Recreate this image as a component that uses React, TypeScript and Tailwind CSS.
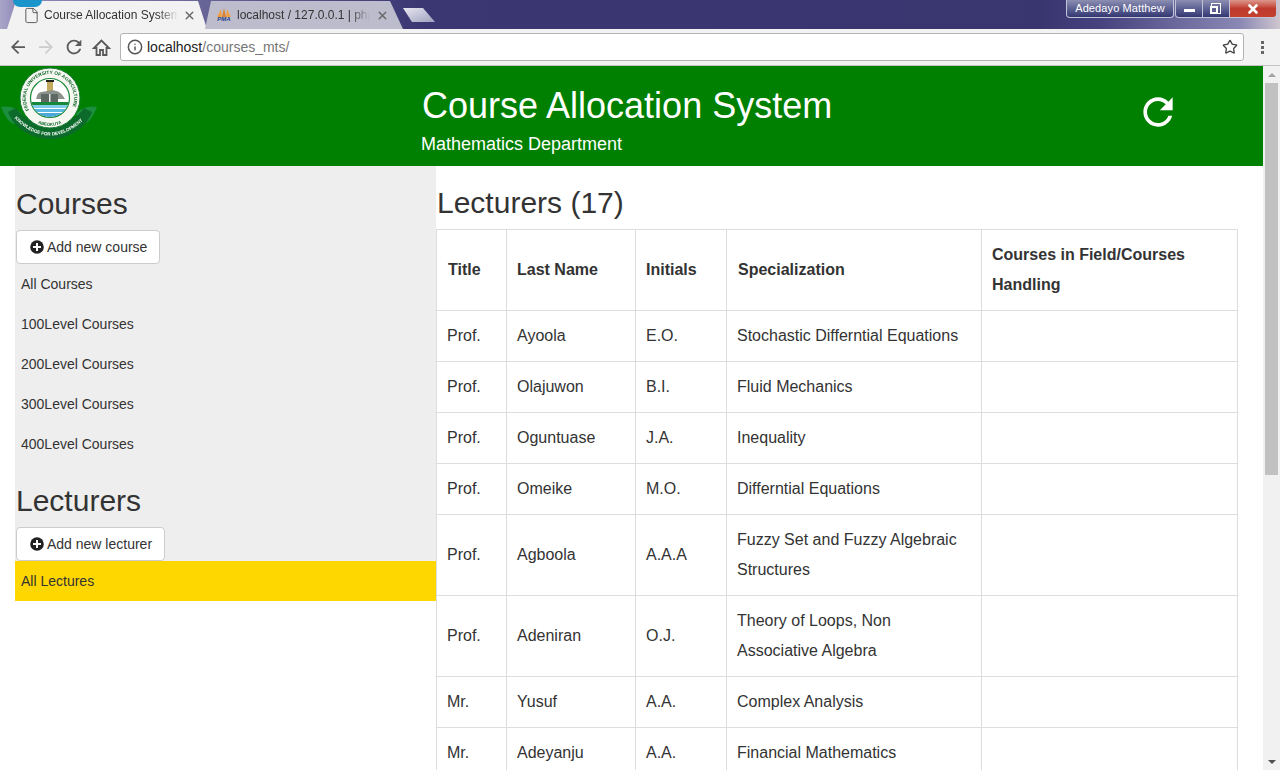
import React from 'react';
import { Info, Star, X, File } from 'lucide-react';

const lecturers = [
  { title: 'Prof.', last: 'Ayoola', initials: 'E.O.', spec: 'Stochastic Differntial Equations' },
  { title: 'Prof.', last: 'Olajuwon', initials: 'B.I.', spec: 'Fluid Mechanics' },
  { title: 'Prof.', last: 'Oguntuase', initials: 'J.A.', spec: 'Inequality' },
  { title: 'Prof.', last: 'Omeike', initials: 'M.O.', spec: 'Differntial Equations' },
  { title: 'Prof.', last: 'Agboola', initials: 'A.A.A', spec: 'Fuzzy Set and Fuzzy Algebraic Structures' },
  { title: 'Prof.', last: 'Adeniran', initials: 'O.J.', spec: 'Theory of Loops, Non Associative Algebra' },
  { title: 'Mr.', last: 'Yusuf', initials: 'A.A.', spec: 'Complex Analysis' },
  { title: 'Mr.', last: 'Adeyanju', initials: 'A.A.', spec: 'Financial Mathematics' },
];

const courseLinks = ['All Courses', '100Level Courses', '200Level Courses', '300Level Courses', '400Level Courses'];

const REFRESH =
  'M17.65 6.35C16.2 4.9 14.21 4 12 4c-4.42 0-7.99 3.58-7.99 8s3.57 8 7.99 8c3.73 0 6.84-2.55 7.73-6h-2.08c-.82 2.33-3.04 4-5.65 4-3.31 0-6-2.69-6-6s2.69-6 6-6c1.66 0 3.14.69 4.22 1.78L13 11h7V4l-2.35 2.35z';

const Logo = () => (
  <svg width="98" height="74" viewBox="0 0 98 74" className="shrink-0 blur-[0.3px]">
    <defs>
      <clipPath id="inner">
        <circle cx="50" cy="32" r="19" />
      </clipPath>
      <path id="ringTop" d="M29.2 44 A24 24 0 1 1 70.8 44" />
      <path id="ringBottom" d="M36 56.2 A28 28 0 0 0 64 56.2" />
      <path id="ribbon" d="M12 50 Q50 89 88 50" />
    </defs>
    {/* leaves */}
    <path d="M1 41 C9 39 17 42 22 48 L14 58 C8 56 5 50 1 41Z" fill="#1c8f3e" />
    <path d="M97 41 C89 39 81 42 76 48 L84 58 C90 56 93 50 97 41Z" fill="#1c8f3e" />
    <path d="M8 46 C22 82 78 82 92 46 L84 42 C70 64 30 64 16 42Z" fill="#0c6a2a" />
    <circle cx="50" cy="32" r="30" fill="#f5f7f0" stroke="#157a33" strokeWidth="1" />
    <text fontSize="4.8" fontWeight="700" fill="#14692f" fontFamily="Liberation Sans, sans-serif">
      <textPath href="#ringTop">FEDERAL UNIVERSITY OF AGRICULTURE</textPath>
    </text>
    <text fontSize="4.4" fontWeight="700" fill="#14692f" fontFamily="Liberation Sans, sans-serif">
      <textPath href="#ringBottom" startOffset="2">ABEOKUTA</textPath>
    </text>
    <circle cx="50" cy="32" r="19.5" fill="#ffffff" stroke="#1a8a3a" strokeWidth="1.2" />
    <g clipPath="url(#inner)">
      <rect x="46" y="14" width="8" height="2" fill="#222" />
      <rect x="47" y="16" width="6" height="9" fill="#c2a95e" />
      <path d="M37 30 C38 25 44 26 47 25 C53 23 60 25 63 30 L65 33 L36 33Z" fill="#8b918b" />
      <rect x="41" y="28" width="17" height="8" fill="#5d6862" />
      <rect x="49" y="28" width="1.5" height="8" fill="#e8e8e8" />
      <rect x="28" y="36" width="44" height="3" fill="#17883a" />
      <rect x="28" y="39" width="44" height="3" fill="#7fcdea" />
      <rect x="28" y="42" width="44" height="1" fill="#ffffff" />
      <rect x="28" y="43" width="44" height="3" fill="#5cb9e2" />
      <rect x="28" y="46" width="44" height="1" fill="#ffffff" />
      <rect x="28" y="47" width="44" height="6" fill="#4aa9d8" />
    </g>
    <text fontSize="4.6" fontWeight="700" fill="#ffffff" fontFamily="Liberation Sans, sans-serif">
      <textPath href="#ribbon" startOffset="3">KNOWLEDGE FOR DEVELOPMENT</textPath>
    </text>
  </svg>
);

const PlusIcon = () => (
  <svg width="14" height="14" viewBox="0 0 14 14" className="shrink-0">
    <circle cx="7" cy="7" r="6.8" fill="#222" />
    <path d="M6 3h2v3h3v2H8v3H6V8H3V6h3z" fill="#fff" />
  </svg>
);

const PmaIcon = () => (
  <div className="w-[16px] h-[14px] shrink-0 flex flex-col items-center">
    <svg width="16" height="9" viewBox="0 0 16 9">
      <path d="M1 9 L5 1 L6 9Z" fill="#f0a040" />
      <path d="M6 9 L8 0 L10 9Z" fill="#d9822b" />
      <path d="M10 9 L11 1 L15 9Z" fill="#f0a040" />
    </svg>
    <span className="text-[6px] leading-[5px] font-bold italic text-[#2b3f8e]">PMA</span>
  </div>
);

export default function App() {
  return (
    <div className="h-[770px] w-[1280px] overflow-hidden flex flex-col bg-white text-[16px] text-[#333] font-['Liberation_Sans',Arial,sans-serif]">
      {/* Window title bar + tabs */}
      <div className="h-[29px] shrink-0 flex items-end pl-[7px] relative overflow-hidden bg-[linear-gradient(90deg,#a9a5c8_0px,#8f8bb8_16px,#3a3773_420px,#38356f_1040px,#45427e_1100px,#8a88b4_1240px,#cfc6cf_1280px)]">
        <div className="w-[200px] h-[28px] shrink-0 bg-[#f2f2f2] [clip-path:polygon(0_100%,9px_0,191px_0,200px_100%)] flex items-center pl-[16px]">
          <File size={17} strokeWidth={1.2} className="text-[#444] shrink-0" />
          <span className="ml-[4px] text-[12px] text-[#333] whitespace-nowrap overflow-hidden w-[134px] shrink-0 [mask-image:linear-gradient(90deg,#000_85%,transparent)]">Course Allocation System</span>
          <X size={13} strokeWidth={2.6} className="ml-[5px] text-[#666] shrink-0" />
        </div>
        <div className="w-[198px] h-[28px] shrink-0 -ml-[2px] bg-[#bcbccc] [clip-path:polygon(0_100%,6px_0,185px_0,198px_100%)] flex items-center pl-[11px]">
          <PmaIcon />
          <span className="ml-[5px] text-[12px] text-[#333] whitespace-nowrap overflow-hidden w-[133px] shrink-0 [mask-image:linear-gradient(90deg,#000_85%,transparent)]">localhost / 127.0.0.1 | phpMyAdmin</span>
          <X size={13} strokeWidth={2.6} className="ml-[6px] text-[#666] shrink-0" />
        </div>
        <div className="w-[32px] h-[14px] mb-[7px] shrink-0 bg-gradient-to-br from-[#e8e8f0] to-[#a0a0c0] [clip-path:polygon(0_0,20px_0,32px_100%,9px_100%)]" />

        <div className="ml-auto self-start flex h-[18px] mr-[3px]">
          <div className="w-[108px] mr-[1px] rounded-b-[4px] border border-t-0 border-[#c4c4d8] bg-gradient-to-b from-[#8d8eb2] to-[#343873] text-[11px] leading-[17px] text-center text-white whitespace-nowrap tracking-[0.1px]">Adedayo Matthew</div>
          <div className="w-[28px] rounded-bl-[4px] border border-t-0 border-[#c4c4d8] bg-gradient-to-b from-[#8d8eb2] to-[#343873] flex items-center justify-center">
            <div className="w-[11px] h-[3px] mt-[3px] bg-white" />
          </div>
          <div className="w-[27px] border-b border-r border-[#c4c4d8] bg-gradient-to-b from-[#8d8eb2] to-[#343873] flex items-center justify-center">
            <div className="w-[10px] h-[11px] mb-[1px] border border-white relative">
              <div className="absolute left-[-2px] bottom-[-1px] w-[8px] h-[8px] border-2 border-white bg-[#5f6090]" />
            </div>
          </div>
          <div className="w-[47px] rounded-br-[4px] border-b border-r border-[#c4c4d8] bg-gradient-to-b from-[#dc968c] via-[#c0392f] to-[#c2402c] flex items-center justify-center">
            <X size={14} strokeWidth={4.5} className="text-white" />
          </div>
        </div>
      </div>

      {/* Browser toolbar */}
      <div className="h-[37px] shrink-0 flex items-center bg-[#f2f2f2] border-b border-[#c4c4c4]">
        <svg width="14" height="14" viewBox="0 0 16 16" className="ml-[11px] shrink-0">
          <path d="M16 7H3.83l5.59-5.59L8 0 0 8l8 8 1.41-1.41L3.83 9H16z" fill="#5a5a5a" />
        </svg>
        <svg width="14" height="14" viewBox="0 0 16 16" className="ml-[14px] shrink-0">
          <path d="M0 7h12.17L6.58 1.41 8 0l8 8-8 8-1.41-1.41L12.17 9H0z" fill="#cccccc" />
        </svg>
        <svg width="22" height="22" viewBox="0 0 24 24" className="ml-[10px] shrink-0">
          <path d={REFRESH} fill="#5a5a5a" />
        </svg>
        <svg width="19" height="19" viewBox="0 0 19 19" className="ml-[7px] shrink-0">
          <path d="M9.5 2.5 L2 10 H4.5 V17 H8 V12 H11 V17 H14.5 V10 H17 Z" fill="none" stroke="#5a5a5a" strokeWidth="1.8" strokeLinejoin="miter" />
        </svg>
        <div className="ml-[9px] w-[1124px] h-[28px] shrink-0 flex items-center bg-white border border-[#b4b4b4] rounded-[3px] pl-[6px] pr-[5px]">
          <Info size={16} strokeWidth={2.2} className="text-[#555]" />
          <span className="ml-[4px] text-[14px] text-[#222]">localhost</span>
          <span className="text-[14px] text-[#777]">/courses_mts/</span>
          <Star size={16} strokeWidth={2} className="ml-auto text-[#444]" />
        </div>
        <div className="ml-[17px] flex flex-col gap-[2px]">
          <div className="w-[3px] h-[3px] bg-[#666]" />
          <div className="w-[3px] h-[3px] bg-[#666]" />
          <div className="w-[3px] h-[3px] bg-[#666]" />
        </div>
      </div>

      <div className="flex-1 min-h-0 flex">
        {/* Page */}
        <div className="w-[1263px] shrink-0 overflow-hidden">
          <header className="h-[100px] bg-[#008000] flex text-white">
            <div className="w-[421px] shrink-0"><Logo /></div>
            <div className="w-[700px] shrink-0">
              <h1 className="ml-[1px] mt-[18px] text-[36px] leading-[44px] font-normal whitespace-nowrap">Course Allocation System</h1>
              <p className="mt-[4px] text-[18px] leading-[24px]">Mathematics Department</p>
            </div>
            <div className="pt-[24px] pl-[15px]">
              <svg width="44" height="44" viewBox="0 0 24 24">
                <path d={REFRESH} fill="#ffffff" />
              </svg>
            </div>
          </header>

          <div className="flex">
            <aside className="w-[421px] ml-[15px] shrink-0 self-start bg-[#eeeeee] h-[435px]">
              <h2 className="ml-[1px] pt-[20px] text-[30px] leading-[36px] font-normal">Courses</h2>
              <button className="ml-[1px] mt-[8px] h-[34px] pl-[13px] pr-[12px] bg-white border border-[#cccccc] rounded-[4px] flex items-center gap-[3px] text-[14px]">
                <PlusIcon />
                Add new course
              </button>
              <ul className="text-[14px]">
                {courseLinks.map((c) => (
                  <li key={c} className="h-[40px] leading-[40px] pl-[6px]">{c}</li>
                ))}
              </ul>
              <h2 className="ml-[1px] mt-[19px] text-[30px] leading-[36px] font-normal">Lecturers</h2>
              <button className="ml-[1px] mt-[8px] h-[34px] pl-[13px] pr-[12px] bg-white border border-[#cccccc] rounded-[4px] flex items-center gap-[3px] text-[14px]">
                <PlusIcon />
                Add new lecturer
              </button>
              <div className="h-[40px] leading-[40px] pl-[6px] bg-[#ffd700] text-[14px]">All Lectures</div>
            </aside>

            <main className="w-[802px] shrink-0">
              <h2 className="pl-[1px] mt-[19px] mb-[8px] text-[30px] leading-[36px] font-normal">Lecturers (17)</h2>
              <table className="w-[802px] border-collapse table-fixed">
                <thead>
                  <tr className="font-bold text-left leading-[30px]">
                    <th className="w-[70px] border border-[#dddddd] px-[11px] py-[10px]">Title</th>
                    <th className="w-[129px] border border-[#dddddd] px-[10px] py-[10px]">Last Name</th>
                    <th className="w-[91px] border border-[#dddddd] px-[10px] py-[10px]">Initials</th>
                    <th className="w-[255px] border border-[#dddddd] px-[11px] py-[10px]">Specialization</th>
                    <th className="border border-[#dddddd] px-[10px] py-[10px]">Courses in Field/Courses Handling</th>
                  </tr>
                </thead>
                <tbody>
                  {lecturers.map((l) => (
                    <tr key={l.last} className="leading-[30px]">
                      <td className="border border-[#dddddd] px-[10px] py-[10px]">{l.title}</td>
                      <td className="border border-[#dddddd] px-[10px] py-[10px]">{l.last}</td>
                      <td className="border border-[#dddddd] px-[10px] py-[10px]">{l.initials}</td>
                      <td className="border border-[#dddddd] px-[10px] py-[10px]">{l.spec}</td>
                      <td className="border border-[#dddddd] px-[10px] py-[10px]"></td>
                    </tr>
                  ))}
                </tbody>
              </table>
            </main>
          </div>
        </div>

        {/* Scrollbar */}
        <div className="w-[17px] shrink-0 bg-[#f1f1f1] flex flex-col items-center">
          <div className="h-[17px] shrink-0 flex items-center justify-center">
            <div className="w-0 h-0 border-x-[4px] border-x-transparent border-b-[4px] border-b-[#a3a3a3]" />
          </div>
          <div className="w-[13px] h-[392px] bg-[#c1c1c1]" />
          <div className="mt-auto h-[17px] shrink-0 flex items-center justify-center">
            <div className="w-0 h-0 border-x-[4px] border-x-transparent border-t-[4px] border-t-[#505050]" />
          </div>
        </div>
      </div>

      {/* Windows orb peeking over the tab */}
      <div className="absolute left-[13px] top-0 w-[29px] h-[7px] rounded-b-full bg-[#1a95cc]" />
    </div>
  );
}
